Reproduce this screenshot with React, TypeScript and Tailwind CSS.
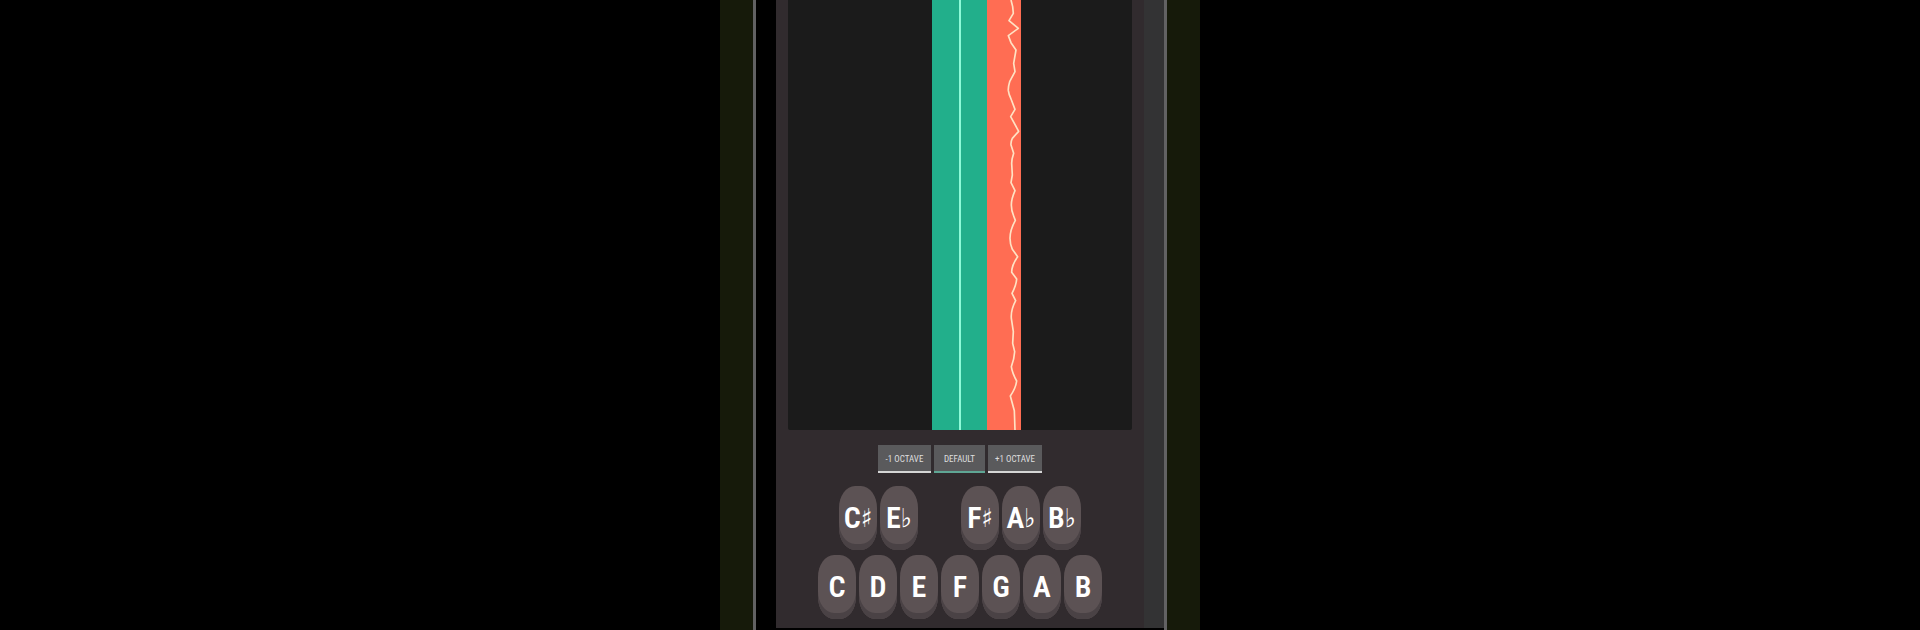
import { useState } from 'react';

type Note = {
  letter: string;
  accidental?: string;
};

const octaves = [
  { label: '-1 OCTAVE', shift: -1, width: 'w-[53px]' },
  { label: 'DEFAULT', shift: 0, width: 'w-[51px]' },
  { label: '+1 OCTAVE', shift: 1, width: 'w-[54px]' },
];

// null leaves the gap between E♭ and F♯
const upperNotes: (Note | null)[] = [
  { letter: 'C', accidental: '♯' },
  { letter: 'E', accidental: '♭' },
  null,
  { letter: 'F', accidental: '♯' },
  { letter: 'A', accidental: '♭' },
  { letter: 'B', accidental: '♭' },
];

const lowerNotes: Note[] = ['C', 'D', 'E', 'F', 'G', 'A', 'B'].map((letter) => ({ letter }));

function NoteKey({ note }: { note: Note }) {
  return (
    <button className="flex h-16 w-[38px] items-center justify-center rounded-[16px/22px] bg-[#5c5254] font-['Roboto_Condensed','Roboto',sans-serif] text-[30px] leading-8 font-semibold text-white shadow-[inset_0_-6px_0_#4a4245]">
      {note.letter}
      {note.accidental && (
        <span className="font-['DejaVu_Sans_Condensed','DejaVu_Sans',sans-serif] text-[26px] font-normal">{note.accidental}</span>
      )}
    </button>
  );
}

function PitchChart() {
  return (
    <div className="flex flex-1 rounded-b-xs bg-[#1b1b1b] pl-36">
      <div className="flex w-[55px] justify-center bg-[#22af8b]">
        <div className="w-[2px] bg-[#8dfbd8]" />
      </div>
      <div className="relative w-[34px] bg-[#ff6d53]">
        <svg
          className="absolute inset-0 h-full w-full"
          viewBox="0 0 102 1290"
          preserveAspectRatio="none"
          fill="none"
          stroke="#ffe2c4"
          strokeWidth="5"
          strokeLinejoin="round"
        >
          <path d="M72 0L77 20L79 40L66 62L94 85L64 107L72 128L87 150L80 190L84 215L68 245Q63 262 64 272Q66 285 71 294L84 328L71 350L95 394L76 415Q71 425 72 435L80 460Q74 478 74 490L76 525L72 548L84 572Q73 597 73 615Q73 632 80 648L85 661Q69 690 69 715Q69 733 76 748L92 770Q74 795 74 817L89 837Q88 855 75 880L86 902Q71 930 73 955L79 995L77 1030L83 1055Q82 1075 73 1100Q76 1120 89 1143Q86 1165 70 1188L82 1232L84 1290" />
        </svg>
      </div>
    </div>
  );
}

export default function App() {
  const [octave, setOctave] = useState(0);

  return (
    <div className="min-h-screen bg-black">
      <div className="mx-auto flex min-h-screen max-w-[480px] bg-[#161a0a] px-[33px]">
        {/* Phone body */}
        <div className="flex flex-1 border-x-3 border-[#626263] bg-black pl-5">
          <div className="mb-[2px] flex flex-1 bg-[#333334] pr-5">
            <main className="flex flex-1 flex-col bg-[#312b2e] px-3 pb-[9px]">
              <PitchChart />

              <div className="mt-[15px] flex justify-center gap-[3px]">
                {octaves.map(({ label, shift, width }) => (
                  <button
                    key={label}
                    onClick={() => setOctave(shift)}
                    className={`h-7 border-b-2 bg-[#5a5a5c] pt-[2px] text-center font-['Roboto_Condensed','Roboto',sans-serif] text-[9px] leading-3 whitespace-nowrap text-[#dededf] ${width} ${
                      octave === shift ? 'border-[#5fa694]' : 'border-[#d5d5d5]'
                    }`}
                  >
                    {label}
                  </button>
                ))}
              </div>

              <div className="mt-[13px] flex justify-center gap-[3px]">
                {upperNotes.map((note, i) =>
                  note ? <NoteKey key={i} note={note} /> : <div key={i} className="w-[37px]" />
                )}
              </div>
              <div className="mt-[5px] flex justify-center gap-[3px]">
                {lowerNotes.map((note) => (
                  <NoteKey key={note.letter} note={note} />
                ))}
              </div>
            </main>
          </div>
        </div>
      </div>
    </div>
  );
}
